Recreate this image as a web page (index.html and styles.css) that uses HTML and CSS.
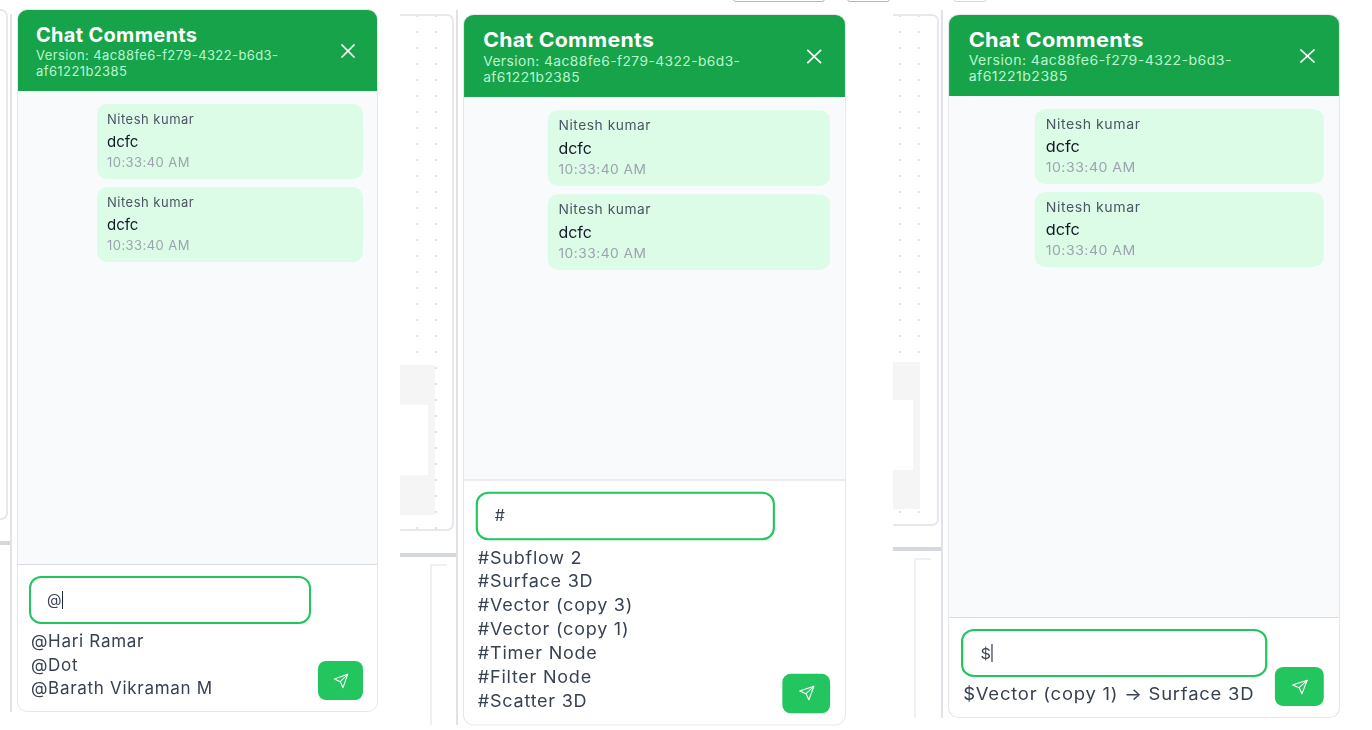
FILE: index.html
```html
<!DOCTYPE html>
<html lang="en">
<head>
    <meta charset="UTF-8">
    <meta name="viewport" content="width=device-width, initial-scale=1.0">
    <title>Chat Comments</title>
    <link rel="stylesheet" href="styles.css">
</head>
<body>
    <div class="canvas">
        <!-- Bits of the flow editor that show between the panels -->
        <div class="top-bit top-bit-a"></div>
        <div class="top-bit top-bit-b"></div>
        <div class="top-bit top-bit-c"></div>

        <div class="editor editor-one">
            <div class="node-card"></div>
            <div class="rule"></div>
            <div class="divider"></div>
        </div>
        <div class="editor editor-two">
            <div class="node-card dotted"><div class="block"><div class="notch"></div></div></div>
            <div class="rule"></div>
            <div class="lower-box"></div>
            <div class="divider"></div>
        </div>
        <div class="editor editor-three">
            <div class="node-card dotted"><div class="block"><div class="notch"></div></div></div>
            <div class="rule"></div>
            <div class="lower-box"></div>
            <div class="divider"></div>
        </div>

        <!-- Mention list: people -->
        <section class="chat-panel panel-one">
            <header class="chat-header">
                <div class="chat-heading">
                    <h2>Chat Comments</h2>
                    <p>Version: 4ac88fe6-f279-4322-b6d3-af61221b2385</p>
                </div>
                <svg class="close-icon" viewBox="0 0 24 24" fill="none" stroke="currentColor" stroke-width="1.7" stroke-linecap="round"><path d="M18 6 6 18"/><path d="m6 6 12 12"/></svg>
            </header>
            <div class="chat-messages">
                <div class="bubble">
                    <div class="bubble-author">Nitesh kumar</div>
                    <div class="bubble-text">dcfc</div>
                    <div class="bubble-time">10:33:40 AM</div>
                </div>
                <div class="bubble">
                    <div class="bubble-author">Nitesh kumar</div>
                    <div class="bubble-text">dcfc</div>
                    <div class="bubble-time">10:33:40 AM</div>
                </div>
            </div>
            <footer class="chat-footer">
                <div class="composer">
                    <div class="composer-input">@<span class="caret"></span></div>
                    <ul class="suggestions">
                        <li>@Hari Ramar</li>
                        <li>@Dot</li>
                        <li>@Barath Vikraman M</li>
                    </ul>
                </div>
                <button class="send-btn" type="button">
                    <svg viewBox="0 0 24 24" fill="none" stroke="currentColor" stroke-width="1.6" stroke-linecap="round" stroke-linejoin="round"><path d="M22 2 11 13"/><path d="M22 2 15 22l-4-9-9-4z"/></svg>
                </button>
            </footer>
        </section>

        <!-- Mention list: nodes -->
        <section class="chat-panel panel-two">
            <header class="chat-header">
                <div class="chat-heading">
                    <h2>Chat Comments</h2>
                    <p>Version: 4ac88fe6-f279-4322-b6d3-af61221b2385</p>
                </div>
                <svg class="close-icon" viewBox="0 0 24 24" fill="none" stroke="currentColor" stroke-width="1.7" stroke-linecap="round"><path d="M18 6 6 18"/><path d="m6 6 12 12"/></svg>
            </header>
            <div class="chat-messages">
                <div class="bubble">
                    <div class="bubble-author">Nitesh kumar</div>
                    <div class="bubble-text">dcfc</div>
                    <div class="bubble-time">10:33:40 AM</div>
                </div>
                <div class="bubble">
                    <div class="bubble-author">Nitesh kumar</div>
                    <div class="bubble-text">dcfc</div>
                    <div class="bubble-time">10:33:40 AM</div>
                </div>
            </div>
            <footer class="chat-footer">
                <div class="composer">
                    <div class="composer-input">#</div>
                    <ul class="suggestions">
                        <li>#Subflow 2</li>
                        <li>#Surface 3D</li>
                        <li>#Vector (copy 3)</li>
                        <li>#Vector (copy 1)</li>
                        <li>#Timer Node</li>
                        <li>#Filter Node</li>
                        <li>#Scatter 3D</li>
                    </ul>
                </div>
                <button class="send-btn" type="button">
                    <svg viewBox="0 0 24 24" fill="none" stroke="currentColor" stroke-width="1.6" stroke-linecap="round" stroke-linejoin="round"><path d="M22 2 11 13"/><path d="M22 2 15 22l-4-9-9-4z"/></svg>
                </button>
            </footer>
        </section>

        <!-- Mention list: edges -->
        <section class="chat-panel panel-three">
            <header class="chat-header">
                <div class="chat-heading">
                    <h2>Chat Comments</h2>
                    <p>Version: 4ac88fe6-f279-4322-b6d3-af61221b2385</p>
                </div>
                <svg class="close-icon" viewBox="0 0 24 24" fill="none" stroke="currentColor" stroke-width="1.7" stroke-linecap="round"><path d="M18 6 6 18"/><path d="m6 6 12 12"/></svg>
            </header>
            <div class="chat-messages">
                <div class="bubble">
                    <div class="bubble-author">Nitesh kumar</div>
                    <div class="bubble-text">dcfc</div>
                    <div class="bubble-time">10:33:40 AM</div>
                </div>
                <div class="bubble">
                    <div class="bubble-author">Nitesh kumar</div>
                    <div class="bubble-text">dcfc</div>
                    <div class="bubble-time">10:33:40 AM</div>
                </div>
            </div>
            <footer class="chat-footer">
                <div class="composer">
                    <div class="composer-input">$<span class="caret"></span></div>
                    <ul class="suggestions">
                        <li>$Vector (copy 1) → Surface 3D</li>
                    </ul>
                </div>
                <button class="send-btn" type="button">
                    <svg viewBox="0 0 24 24" fill="none" stroke="currentColor" stroke-width="1.6" stroke-linecap="round" stroke-linejoin="round"><path d="M22 2 11 13"/><path d="M22 2 15 22l-4-9-9-4z"/></svg>
                </button>
            </footer>
        </section>
    </div>
</body>
</html>
```

FILE: styles.css
```css
* {
    box-sizing: border-box;
}

html, body {
    margin: 0;
    height: 100%;
    overflow: hidden;
    background: #fff;
}

body {
    font-family: "Inter", "Liberation Sans", sans-serif;
}

.canvas {
    position: relative;
    width: 1372px;
    height: 730px;
    filter: blur(0.45px);
}

/* ---- editor fragments ---- */

.top-bit {
    position: absolute;
    top: -8px;
    height: 10px;
    border: 1px solid #b4b6ba;
    border-radius: 3px;
}

.top-bit-a { left: 733px; width: 92px; }
.top-bit-b { left: 847px; width: 43px; }
.top-bit-c { left: 953px; width: 34px; border-color: #d8d8d8; }

.editor {
    position: absolute;
    overflow: hidden;
}

.editor-one { left: 0; top: 4px; width: 12px; height: 708px; }
.editor-two { left: 400px; top: 0; width: 58px; height: 725px; }
.editor-three { left: 893px; top: 0; width: 50px; height: 718px; }

.node-card {
    position: absolute;
    left: -30px;
    border: 2px solid #e7e8ec;
    border-radius: 7px;
    background: #fff;
}

.editor-one .node-card { top: 5px; width: 38px; height: 511px; }
.editor-two .node-card { top: 14px; width: 84px; height: 517px; }
.editor-three .node-card { top: 14px; width: 76px; height: 512px; }

.dotted {
    background-image: radial-gradient(circle, #cfd1d4 0.8px, transparent 1.2px);
    background-size: 19px 16px;
}

.editor-two .dotted { background-position: 16.5px 8px; }
.editor-three .dotted { background-position: 6.5px 8px; }

.block {
    position: absolute;
    left: 0;
    background: #f5f5f5;
}

.editor-two .block { top: 349px; width: 63px; height: 150px; }
.editor-three .block { top: 346px; width: 55px; height: 147px; }

.notch {
    position: absolute;
    left: 0;
    background: #fff;
    height: 70px;
}

.editor-two .notch { top: 40px; width: 56px; }
.editor-three .notch { top: 38px; width: 48px; }

.rule {
    position: absolute;
    left: 0;
    right: 0;
    height: 4px;
    background: #d4d7dd;
}

.editor-one .rule { top: 537px; }
.editor-two .rule { top: 553px; }
.editor-three .rule { top: 547px; }

.lower-box {
    position: absolute;
    bottom: 0;
    border-left: 2px solid #eef0f3;
    border-top: 2px solid #eef0f3;
}

.editor-two .lower-box { left: 30px; width: 17px; top: 564px; }
.editor-three .lower-box { left: 21px; width: 17px; top: 558px; }

.divider {
    position: absolute;
    top: 10px;
    bottom: 0;
    right: 0;
    width: 2px;
    background: #e0e2e8;
}

/* ---- chat panel ---- */

.chat-panel {
    position: absolute;
    width: 361px;
    display: flex;
    flex-direction: column;
    overflow: hidden;
    background: #fff;
    border: 1px solid #e5e7eb;
    border-radius: 10px;
    transform-origin: 0 0;
}

/* the three captures were pasted at slightly different sizes */
.panel-one { left: 17px; top: 9px; height: 703px; }
.panel-two { left: 463px; top: 14px; height: 702.5px; transform: scale(1.061, 1.012); }
.panel-three { left: 948px; top: 14px; height: 704px; transform: scale(1.086, 1); }

.chat-header {
    display: flex;
    justify-content: space-between;
    align-items: center;
    height: 82px;
    flex: none;
    margin: -1px -1px 0;
    padding: 12px 18px 10px 19px;
    background: #16a34a;
    color: #fff;
}

.chat-heading {
    width: 270px;
}

.chat-heading h2 {
    margin: 0;
    font-size: 20px;
    line-height: 24px;
    font-weight: 700;
    letter-spacing: 0.3px;
}

.chat-heading p {
    margin: 1px 0 0;
    font-size: 13px;
    line-height: 15.5px;
    letter-spacing: 0.4px;
    color: #bbf7d0;
}

.close-icon {
    width: 24px;
    height: 24px;
    flex: none;
}

.chat-messages {
    flex: 1;
    display: flex;
    flex-direction: column;
    align-items: flex-end;
    gap: 7.5px;
    padding: 13px 14px;
    background: #f9fafb;
}

.bubble {
    width: 266px;
    height: 75px;
    padding: 7px 10px;
    border-radius: 10px;
    background: #dcfce7;
}

.bubble-author {
    font-size: 13px;
    line-height: 16px;
    letter-spacing: 0.5px;
    color: #4b5563;
}

.bubble-text {
    margin-top: 5px;
    font-size: 15px;
    line-height: 20px;
    color: #111827;
}

.bubble-time {
    font-size: 13px;
    line-height: 20px;
    letter-spacing: 0.45px;
    color: #9ca3af;
}

.chat-footer {
    display: flex;
    justify-content: space-between;
    align-items: flex-end;
    flex: none;
    padding: 11px 14px 11px 11px;
    border-top: 1px solid #d9dce3;
}

.composer {
    width: 282px;
    margin-bottom: -1px;
}

.composer-input {
    display: flex;
    align-items: center;
    height: 48px;
    padding-left: 16px;
    border: 2px solid #22c55e;
    border-radius: 12px;
    font-size: 15px;
    color: #374151;
}

.caret {
    width: 1px;
    height: 18px;
    background: #1f2937;
}

.suggestions {
    list-style: none;
    margin: 6px 0 0;
    padding: 0 0 0 2px;
    font-size: 17px;
    line-height: 23.7px;
    letter-spacing: 0.7px;
    color: #374151;
}

.send-btn {
    display: flex;
    align-items: center;
    justify-content: center;
    width: 45px;
    height: 39px;
    flex: none;
    padding: 0;
    border: 0;
    border-radius: 8px;
    background: #22c55e;
    color: #fff;
}

.send-btn svg {
    width: 16px;
    height: 16px;
}
```
